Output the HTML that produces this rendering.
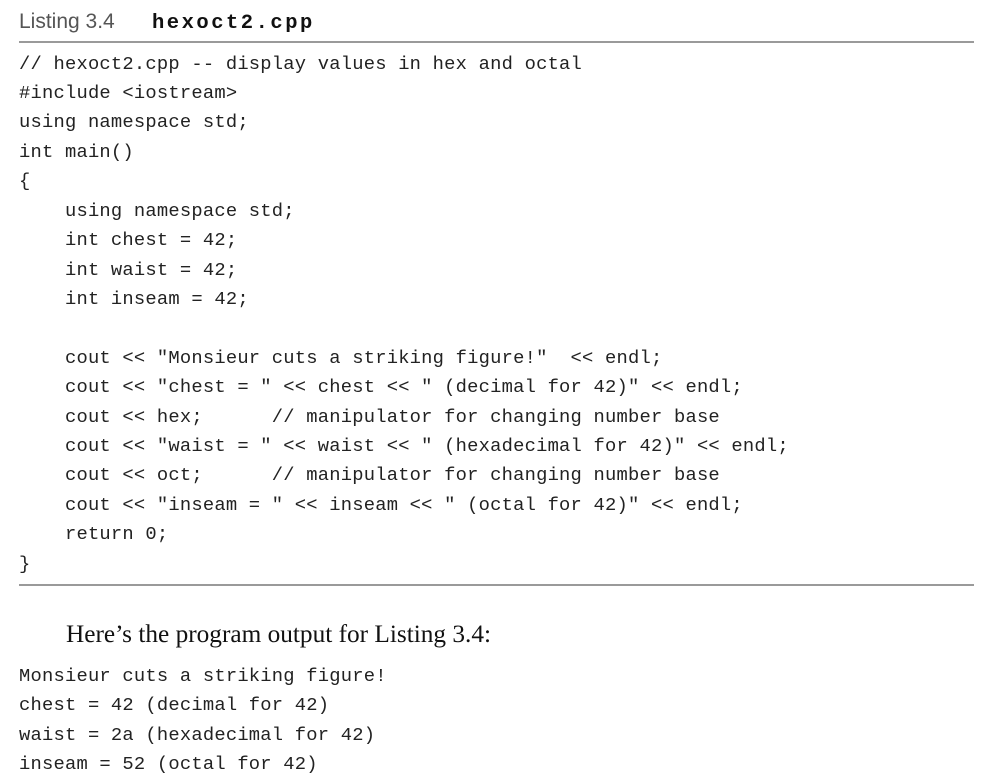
<!DOCTYPE html>
<html><head><meta charset="utf-8"><style>
body{margin:0;background:#fff;width:998px;height:778px;position:relative;overflow:hidden;color:#222}
.l{position:absolute;left:19px;font-family:"Liberation Mono",monospace;font-size:18.8px;letter-spacing:0.22px;white-space:pre;line-height:22px}
.hr{position:absolute;left:19px;width:955px;height:1.5px;background:#9a9a9a}
</style></head><body>
<div style="position:absolute;left:19px;top:9px;font-family:'Liberation Sans',sans-serif;font-size:21px;color:#555;line-height:26px">Listing 3.4</div>
<div style="position:absolute;left:152px;top:11px;font-family:'Liberation Mono',monospace;font-weight:bold;font-size:20.5px;letter-spacing:2.5px;line-height:26px;color:#111">hexoct2.cpp</div>
<div class="hr" style="top:41px"></div>
<div class="l" style="top:53px">// hexoct2.cpp -- display values in hex and octal</div>
<div class="l" style="top:82px">#include &lt;iostream&gt;</div>
<div class="l" style="top:111px">using namespace std;</div>
<div class="l" style="top:141px">int main()</div>
<div class="l" style="top:170px">{</div>
<div class="l" style="top:200px">    using namespace std;</div>
<div class="l" style="top:229px">    int chest = 42;</div>
<div class="l" style="top:259px">    int waist = 42;</div>
<div class="l" style="top:288px">    int inseam = 42;</div>
<div class="l" style="top:347px">    cout &lt;&lt; "Monsieur cuts a striking figure!"  &lt;&lt; endl;</div>
<div class="l" style="top:376px">    cout &lt;&lt; "chest = " &lt;&lt; chest &lt;&lt; " (decimal for 42)" &lt;&lt; endl;</div>
<div class="l" style="top:406px">    cout &lt;&lt; hex;      // manipulator for changing number base</div>
<div class="l" style="top:435px">    cout &lt;&lt; "waist = " &lt;&lt; waist &lt;&lt; " (hexadecimal for 42)" &lt;&lt; endl;</div>
<div class="l" style="top:464px">    cout &lt;&lt; oct;      // manipulator for changing number base</div>
<div class="l" style="top:494px">    cout &lt;&lt; "inseam = " &lt;&lt; inseam &lt;&lt; " (octal for 42)" &lt;&lt; endl;</div>
<div class="l" style="top:523px">    return 0;</div>
<div class="l" style="top:553px">}</div>
<div class="hr" style="top:584px"></div>
<div style="position:absolute;left:66px;top:619px;font-family:'Liberation Serif',serif;font-size:25.3px;line-height:30px;color:#111">Here’s the program output for Listing 3.4:</div>
<div class="l" style="top:665px">Monsieur cuts a striking figure!</div>
<div class="l" style="top:694px">chest = 42 (decimal for 42)</div>
<div class="l" style="top:724px">waist = 2a (hexadecimal for 42)</div>
<div class="l" style="top:753px">inseam = 52 (octal for 42)</div>
</body></html>
